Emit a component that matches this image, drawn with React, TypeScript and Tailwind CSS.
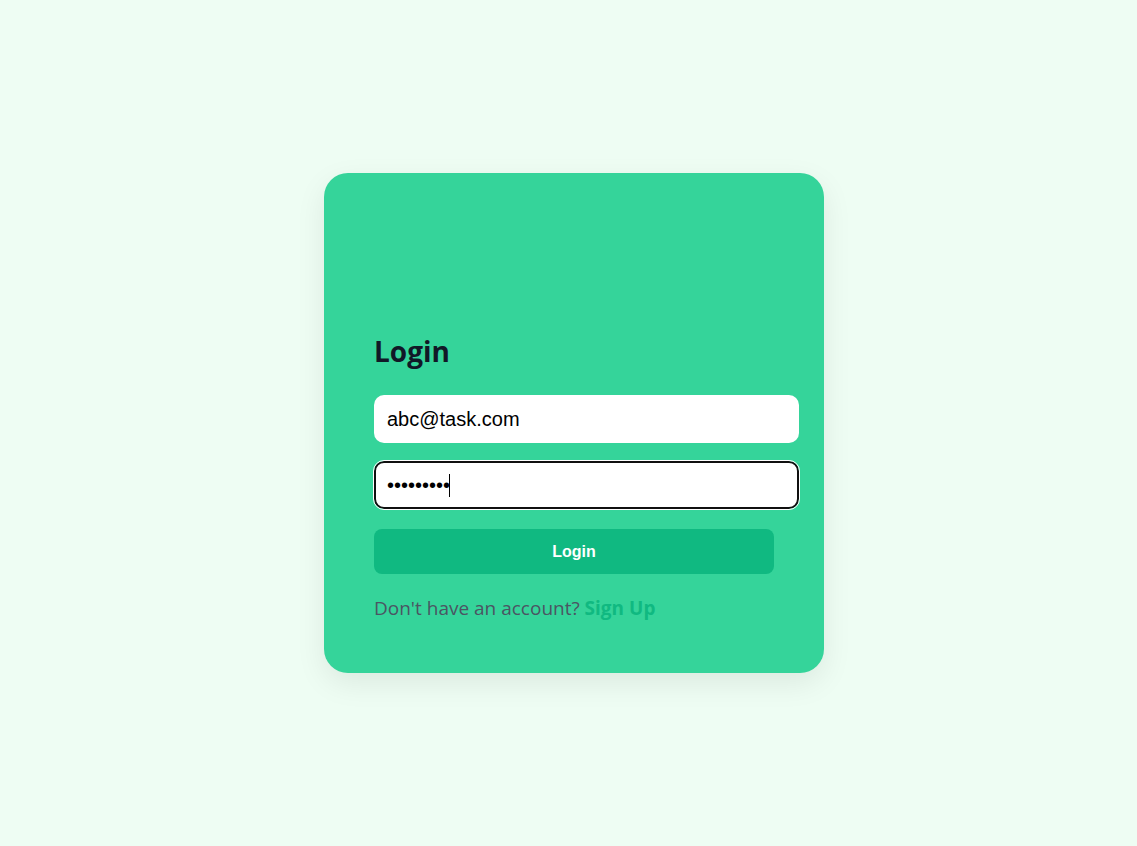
import React from 'react'

export default function App() {
  return (
    <div className="min-h-screen bg-[#eefdf3] flex items-center justify-center pl-[11px] font-['Open_Sans',sans-serif]">
      <div className="w-[500px] h-[500px] bg-[#35d49a] rounded-3xl shadow-[0_10px_30px_rgba(0,0,0,0.08)] px-[50px] pt-[160px]">
        <h1 className="text-[28px] leading-9 font-bold text-[#111827] mb-[26px]">Login</h1>

        <input
          type="email"
          defaultValue="abc@task.com"
          className="block w-[425px] h-12 bg-white rounded-[10px] px-[13px] text-[20px] text-black font-['Liberation_Sans',Arial,sans-serif] outline-none"
        />

        {/* password, shown focused */}
        <div className="relative mt-[18px] w-[425px]">
          <input
            type="password"
            defaultValue="123456789"
            className="block w-full h-12 bg-white rounded-[10px] px-[11px] text-[20px] text-black font-['Liberation_Sans',Arial,sans-serif] border-2 border-[#101010] outline-1 outline-white outline-offset-0"
          />
          <span className="absolute left-[75px] top-[13px] w-px h-[23px] bg-black" />
        </div>

        <button className="block mt-5 w-[400px] h-[45px] bg-[#10b981] rounded-lg text-white text-base font-bold font-['Liberation_Sans',Arial,sans-serif]">
          Login
        </button>

        <p className="mt-5 text-[19px] text-[#4b5563]">
          Don't have an account? <a className="font-bold text-[#10b981]">Sign Up</a>
        </p>
      </div>
    </div>
  )
}
